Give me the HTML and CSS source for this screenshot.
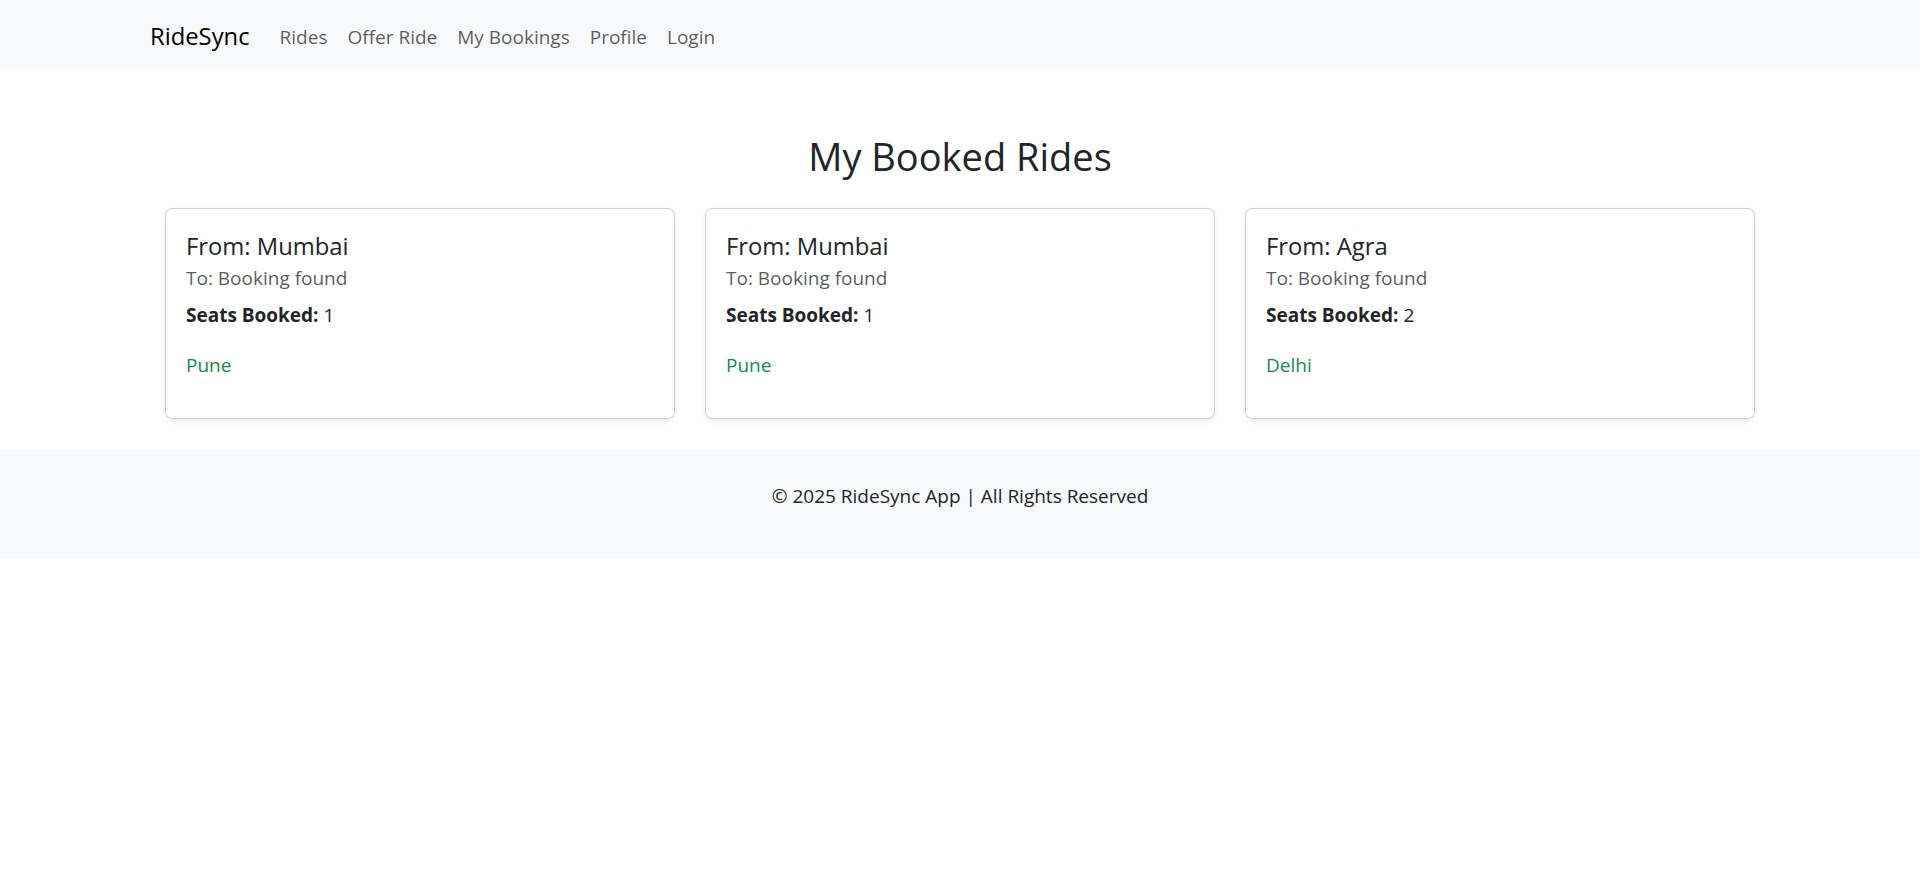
FILE: index.html
```html
<!DOCTYPE html>
<html lang="en">
<head>
<meta charset="utf-8">
<title>My Bookings - RideSync</title>
<link rel="stylesheet" href="styles.css">
</head>
<body>
<nav class="navbar">
  <div class="container nav-inner">
    <a class="brand" href="#">RideSync</a>
    <ul class="nav-list">
      <li><a class="nav-link" href="#">Rides</a></li>
      <li><a class="nav-link" href="#">Offer Ride</a></li>
      <li><a class="nav-link" href="#">My Bookings</a></li>
      <li><a class="nav-link" href="#">Profile</a></li>
      <li><a class="nav-link" href="#">Login</a></li>
    </ul>
  </div>
</nav>

<main class="container main">
  <h2 class="page-title">My Booked Rides</h2>
  <div class="cards">
    <div class="col">
      <div class="card">
        <h5 class="card-title">From: Mumbai</h5>
        <h6 class="card-subtitle">To: Booking found</h6>
        <p class="card-text"><strong>Seats Booked:</strong> 1</p>
        <p class="card-text dest">Pune</p>
      </div>
    </div>
    <div class="col">
      <div class="card">
        <h5 class="card-title">From: Mumbai</h5>
        <h6 class="card-subtitle">To: Booking found</h6>
        <p class="card-text"><strong>Seats Booked:</strong> 1</p>
        <p class="card-text dest">Pune</p>
      </div>
    </div>
    <div class="col">
      <div class="card">
        <h5 class="card-title">From: Agra</h5>
        <h6 class="card-subtitle">To: Booking found</h6>
        <p class="card-text"><strong>Seats Booked:</strong> 2</p>
        <p class="card-text dest">Delhi</p>
      </div>
    </div>
  </div>
</main>

<footer class="footer">
  <p>&copy; 2025 RideSync App | All Rights Reserved</p>
</footer>
</body>
</html>
```
FILE: styles.css
```css
* {
  box-sizing: border-box;
}

body {
  margin: 0;
  font-family: "Open Sans", "Noto Sans", "Liberation Sans", sans-serif;
  font-size: 19px;
  line-height: 30px;
  color: #212529;
  background: #ffffff;
}

a {
  text-decoration: none;
}

.container {
  max-width: 1650px;
  margin: 0 auto;
  padding: 0 15px;
}

.navbar {
  background: #f8f9fa;
  padding: 12px 0 8px;
}

.nav-inner {
  display: flex;
  align-items: center;
}

.brand {
  font-size: 23.8px;
  line-height: 37.5px;
  padding: 6.25px 0;
  margin-right: 20px;
  color: #000000;
}

.nav-list {
  display: flex;
  list-style: none;
  margin: 0;
  padding: 0;
}

.nav-link {
  display: block;
  padding: 10px;
  font-size: 19px;
  line-height: 30px;
  color: rgba(0, 0, 0, 0.65);
}

.main {
  margin-top: 62px;
}

.page-title {
  text-align: center;
  font-size: 38px;
  line-height: 48px;
  font-weight: 400;
  margin: 0 0 28px;
}

.cards {
  display: grid;
  grid-template-columns: repeat(3, 1fr);
  column-gap: 30px;
  padding: 0 15px;
}

.col {
  margin-bottom: 30px;
}

.card {
  border: 1px solid rgba(0, 0, 0, 0.175);
  border-radius: 7.5px;
  box-shadow: 0 2.5px 5px rgba(0, 0, 0, 0.075);
  padding: 22px 20px 18px;
  background: #ffffff;
}

.card-title {
  font-size: 23.8px;
  line-height: 30px;
  font-weight: 400;
  margin: 0 0 10px;
}

.card-subtitle {
  font-size: 19px;
  line-height: 24px;
  font-weight: 400;
  margin: -5px 0 10px;
  color: rgba(33, 37, 41, 0.75);
}

.card-text {
  margin: 0 0 20px;
}

.card-text strong {
  font-weight: 700;
}

.dest {
  color: #198754;
}

.footer {
  background: #f8f9fa;
  text-align: center;
  padding: 32px 30px 28px;
}

.footer p {
  margin: 0 0 20px;
}
```
